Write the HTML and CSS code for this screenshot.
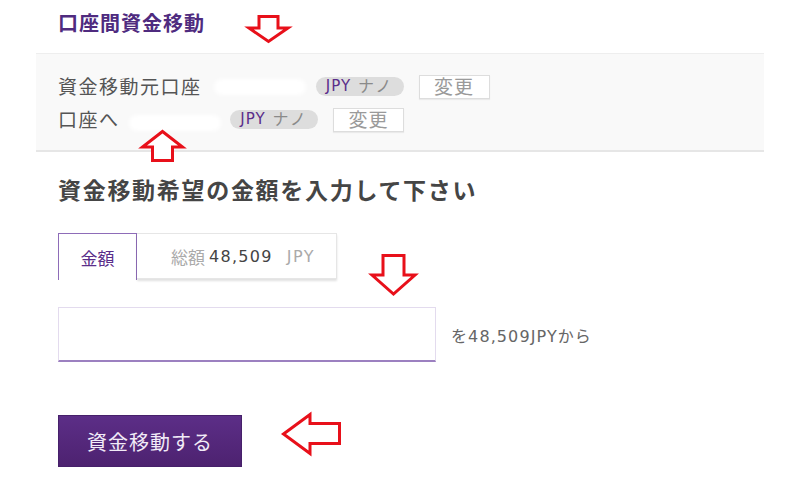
FILE: index.html
```html
<!DOCTYPE html>
<html lang="ja">
<head>
<meta charset="utf-8">
<title>口座間資金移動</title>
<link rel="stylesheet" href="styles.css">
</head>
<body>
<div class="page">
  <h1 class="title">口座間資金移動</h1>
  <section class="panel">
    <div class="acct-row">
      <span class="acct-label">資金移動元口座</span>
      <span class="redact redact-from"></span>
      <span class="pill"><span class="cur">JPY</span><span class="kind">ナノ</span></span>
      <button class="change" type="button">変更</button>
    </div>
    <div class="acct-row">
      <span class="acct-label">口座へ</span>
      <span class="redact redact-to"></span>
      <span class="pill"><span class="cur">JPY</span><span class="kind">ナノ</span></span>
      <button class="change" type="button">変更</button>
    </div>
  </section>
  <h2 class="heading">資金移動希望の金額を入力して下さい</h2>
  <div class="tabs">
    <div class="tab tab-active">金額</div>
    <div class="tab tab-total"><span class="muted">総額</span><span class="num">48,509</span><span class="muted unit">JPY</span></div>
  </div>
  <div class="amount-row">
    <input class="amount" type="text">
    <span class="hint">を48,509JPYから</span>
  </div>
  <div class="actions">
    <button class="submit" type="button">資金移動する</button>
  </div>
</div>
<svg class="marks" width="800" height="486" viewBox="0 0 800 486">
  <polygon points="259,16.5 278,16.5 278,28 288,28 268.5,41.5 249,28 259,28"/>
  <polygon points="162.5,131.5 182.5,147 172.5,147 172.5,160.5 152.5,160.5 152.5,147 142.5,147"/>
  <polygon points="383,255.5 404,255.5 404,275 415,275 393.5,294 372,275 383,275"/>
  <polygon points="283.5,434 310,414.5 310,423.5 339.5,423.5 339.5,443.5 310,443.5 310,453.5"/>
</svg>
</body>
</html>
```

FILE: styles.css
```css
* { box-sizing: border-box; }
html, body { margin: 0; padding: 0; background: #fff; }
body {
  position: relative;
  width: 800px;
  height: 486px;
  overflow: hidden;
  font-family: "DejaVu Sans", "Noto Sans CJK JP", sans-serif;
  color: #555;
}
.page {
  width: 728px;
  margin-left: 36px;
}
.title {
  margin: 0;
  height: 53px;
  padding: 12px 0 0 22px;
  font-size: 20px;
  line-height: 24px;
  font-weight: bold;
  letter-spacing: 1px;
  color: #4f2b7f;
}
.panel {
  background: #f9f9f9;
  border-top: 1px solid #eeeeee;
  border-bottom: 2px solid #e6e6e6;
  padding: 16px 22px 14px;
}
.acct-row {
  display: flex;
  align-items: center;
  height: 33px;
}
.acct-label {
  font-size: 19px;
  letter-spacing: 1.5px;
  color: #555;
  line-height: 24px;
}
.redact {
  display: inline-block;
  width: 92px;
  height: 16px;
  background: #fff;
  border-radius: 8px;
  filter: blur(2px);
}
.redact-from { margin-left: 12px; }
.redact-to { margin-left: 9px; margin-top: 6px; }
.pill {
  display: inline-flex;
  align-items: center;
  justify-content: center;
  gap: 7px;
  width: 88px;
  height: 19px;
  margin-left: 10px;
  border-radius: 10px;
  background: #dddddd;
  line-height: 19px;
}
.acct-row + .acct-row .pill { margin-left: 9.5px; }
.cur {
  font-size: 15px;
  letter-spacing: 1px;
  color: #5a2d8a;
}
.kind {
  font-size: 16px;
  letter-spacing: 2px;
  color: #8a8a8a;
}
.change {
  width: 71px;
  height: 24px;
  margin-left: 15px;
  padding: 0;
  background: #fff;
  border: 1px solid #dddddd;
  box-shadow: 0 1px 1px rgba(0, 0, 0, 0.06);
  font-family: inherit;
  font-size: 19px;
  line-height: 22px;
  letter-spacing: 1px;
  color: #9a9a9a;
}
.heading {
  margin: 25px 0 0;
  padding-left: 22px;
  font-size: 23px;
  line-height: 28px;
  font-weight: bold;
  letter-spacing: 1.7px;
  color: #454545;
}
.tabs {
  display: flex;
  align-items: flex-start;
  margin-top: 28px;
  padding-left: 22px;
}
.tab {
  display: flex;
  align-items: center;
  font-size: 17px;
}
.tab-active {
  justify-content: center;
  width: 79px;
  height: 47px;
  border: 1px solid #8e6cb8;
  border-bottom: none;
  color: #5a2d8a;
  background: #fff;
}
.tab-total {
  width: 200px;
  height: 46px;
  padding-left: 34px;
  border: 1px solid #e6e6e6;
  border-left: none;
  box-shadow: 0 2px 2px rgba(0, 0, 0, 0.12);
  background: #fff;
}
.muted { color: #aaaaaa; }
.num {
  margin-left: 4px;
  font-size: 16px;
  letter-spacing: 1.3px;
  color: #444;
}
.unit {
  margin-left: 14px;
  font-size: 16px;
  letter-spacing: 1.5px;
}
.amount-row {
  display: flex;
  align-items: center;
  margin-top: 27px;
  padding-left: 22px;
}
.amount {
  width: 378px;
  height: 55px;
  margin: 0;
  border: 1px solid #e3dbee;
  border-bottom: 2px solid #9c80c0;
  background: #fff;
  outline: none;
}
.hint {
  margin-left: 15px;
  font-size: 16px;
  letter-spacing: 1.1px;
  color: #666;
}
.actions {
  margin-top: 53px;
  padding-left: 22px;
}
.submit {
  width: 184px;
  height: 52px;
  padding: 0;
  border: 1px solid #46206a;
  background: linear-gradient(#5c2e87, #4d2270);
  font-family: inherit;
  font-size: 20px;
  letter-spacing: 1px;
  color: #f1ebf7;
}
.marks {
  position: absolute;
  left: 0;
  top: 0;
  pointer-events: none;
}
.marks polygon {
  fill: #fff;
  stroke: #e8101a;
  stroke-width: 3;
  stroke-linejoin: miter;
}
```
